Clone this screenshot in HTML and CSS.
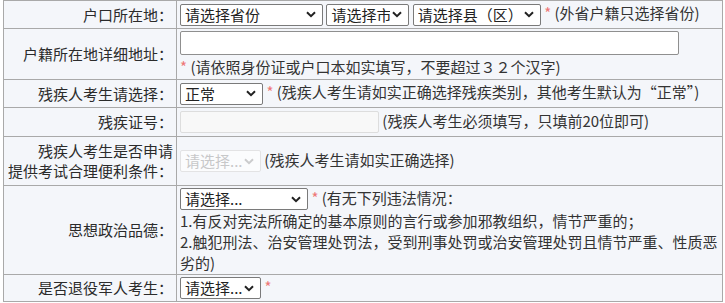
FILE: index.html
```html
<!DOCTYPE html>
<html lang="zh-CN">

<head>
    <meta charset="UTF-8">
    <meta name="viewport" content="width=device-width, initial-scale=1.0">
    <title>考生信息</title>
    <link rel="stylesheet" href="styles.css">
</head>

<body>
    <table class="form">
        <tbody>
            <tr class="row-28">
                <td class="label">户口所在地：</td>
                <td class="value">
                    <select class="sel-province">
                        <option>请选择省份</option>
                    </select>
                    <select class="sel-city">
                        <option>请选择市</option>
                    </select>
                    <select class="sel-county">
                        <option>请选择县（区）</option>
                    </select>
                    <span class="req">*</span> (外省户籍只选择省份)
                </td>
            </tr>
            <tr class="row-50">
                <td class="label">户籍所在地详细地址：</td>
                <td class="value">
                    <input type="text" class="address"><br>
                    <span class="req">*</span> (请依照身份证或户口本如实填写，不要超过３２个汉字)
                </td>
            </tr>
            <tr class="row-28">
                <td class="label">残疾人考生请选择：</td>
                <td class="value">
                    <select class="sel-short">
                        <option>正常</option>
                    </select>
                    <span class="req">*</span> (残疾人考生请如实正确选择残疾类别，其他考生默认为“正常”)
                </td>
            </tr>
            <tr class="row-29">
                <td class="label">残疾证号：</td>
                <td class="value">
                    <input type="text" class="cert" disabled>
                    (残疾人考生必须填写，只填前20位即可)
                </td>
            </tr>
            <tr class="row-48">
                <td class="label">残疾人考生是否申请<br>提供考试合理便利条件：</td>
                <td class="value">
                    <select class="sel-small" disabled>
                        <option>请选择...</option>
                    </select>
                    (残疾人考生请如实正确选择)
                </td>
            </tr>
            <tr class="row-89">
                <td class="label">思想政治品德：</td>
                <td class="value multi">
                    <select class="sel-county">
                        <option>请选择...</option>
                    </select>
                    <span class="req">*</span> (有无下列违法情况：<br>
                    1.有反对宪法所确定的基本原则的言行或参加邪教组织，情节严重的；<br>
                    2.触犯刑法、治安管理处罚法，受到刑事处罚或治安管理处罚且情节严重、性质恶<br>
                    劣的)
                </td>
            </tr>
            <tr class="row-27">
                <td class="label">是否退役军人考生：</td>
                <td class="value">
                    <select class="sel-small">
                        <option>请选择...</option>
                    </select>
                    <span class="req">*</span>
                </td>
            </tr>
        </tbody>
    </table>
</body>

</html>
```

FILE: styles.css
```css
body {
    margin: 0;
    background-color: #ffffff;
    color: #333333;
    font-family: "Noto Sans CJK SC", "Noto Sans", sans-serif;
    font-size: 15px;
    line-height: 20px;
}

.form {
    margin: 0 0 0 3px;
    width: 720px;
    border-collapse: collapse;
    background-color: #f4f6fa;
}

.form td {
    border: 1px solid #a9a9a9;
    padding: 0 3px;
    white-space: nowrap;
}

.row-27 td {
    height: 26px;
}

.row-28 td {
    height: 27px;
}

.row-29 td {
    height: 28px;
}

.row-48 td {
    height: 48px;
}

.row-50 td {
    height: 50px;
}

.row-89 td {
    height: 88px;
}

.label {
    width: 166px;
    text-align: right;
    color: #2b2b2b;
}

.value {
    text-align: left;
}

.multi {
    line-height: 21px;
}

.req {
    color: #ee7777;
}

select {
    appearance: none;
    -webkit-appearance: none;
    height: 22px;
    margin: 0;
    padding: 0 18px 0 4px;
    font-family: inherit;
    font-size: 15px;
    line-height: 20px;
    color: #222222;
    border: 1px solid #7a7a7a;
    border-radius: 2px;
    background-color: #ffffff;
    background-image: url("data:image/svg+xml,%3Csvg xmlns='http://www.w3.org/2000/svg' width='10' height='7' viewBox='0 0 10 7'%3E%3Cpath d='M1 1.2 L5 5.2 L9 1.2' fill='none' stroke='%23222' stroke-width='2'/%3E%3C/svg%3E");
    background-repeat: no-repeat;
    background-position: right 6px center;
    vertical-align: middle;
}

select:disabled {
    color: #b5b5b5;
    border-color: #dcdcdc;
    background-image: url("data:image/svg+xml,%3Csvg xmlns='http://www.w3.org/2000/svg' width='10' height='7' viewBox='0 0 10 7'%3E%3Cpath d='M1 1.2 L5 5.2 L9 1.2' fill='none' stroke='%23bbb' stroke-width='2'/%3E%3C/svg%3E");
}

.sel-province {
    width: 143px;
}

.sel-city {
    width: 83px;
}

.sel-county {
    width: 128px;
}

.sel-short {
    width: 83px;
}

.sel-small {
    width: 81px;
}

input {
    box-sizing: border-box;
    margin: 0;
    font-family: inherit;
    font-size: 15px;
    border: 1px solid #8f8f8f;
    border-radius: 2px;
    background-color: #ffffff;
    vertical-align: middle;
}

.address {
    width: 499px;
    height: 24px;
    margin-bottom: 2px;
}

.cert {
    width: 199px;
    height: 22px;
}

.cert:disabled {
    border-color: #dddddd;
    background-color: #f8f8f8;
}
```
